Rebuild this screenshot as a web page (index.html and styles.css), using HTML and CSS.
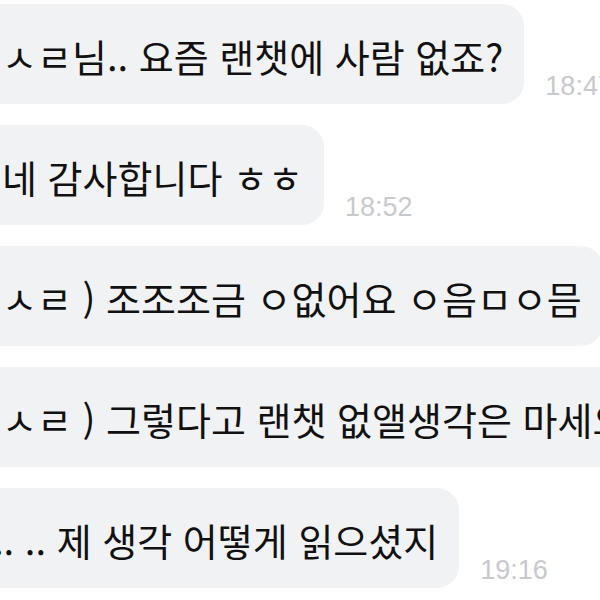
FILE: index.html
```html
<!DOCTYPE html>
<html lang="ko">
<head>
<meta charset="utf-8">
<link rel="stylesheet" href="styles.css">
</head>
<body>
<div class="chat">
  <div class="row">
    <div class="bubble">ㅅㄹ님.. 요즘 랜챗에 사람 없죠?</div>
    <div class="time">18:47</div>
  </div>
  <div class="row">
    <div class="bubble">네 감사합니다 ㅎㅎ</div>
    <div class="time">18:52</div>
  </div>
  <div class="row">
    <div class="bubble">ㅅㄹ ) 조조조금 ㅇ없어요 ㅇ음ㅁㅇ믐</div>
  </div>
  <div class="row">
    <div class="bubble">ㅅㄹ ) 그렇다고 랜챗 없앨생각은 마세요</div>
  </div>
  <div class="row">
    <div class="bubble"><span class="cut">..</span> .. 제 생각 어떻게 읽으셨지</div>
    <div class="time">19:16</div>
  </div>
</div>
</body>
</html>
```
FILE: styles.css
```css
html, body {
  margin: 0;
  padding: 0;
  background: #ffffff;
  overflow: hidden;
  width: 600px;
  height: 600px;
}

.chat {
  display: flex;
  flex-direction: column;
  gap: 21px;
  padding-top: 4px;
  margin-left: -40px;
  width: 900px;
}

.row {
  display: flex;
  align-items: flex-end;
}

.bubble {
  flex-shrink: 0;
  height: 100px;
  box-sizing: border-box;
  display: flex;
  align-items: center;
  padding: 2px 21px 0 42px;
  background: #f1f2f4;
  border-radius: 22px;
  white-space: pre;
  font-family: "Noto Sans CJK KR", "Noto Sans", sans-serif;
  font-size: 38px;
  color: #111111;
}

.cut {
  margin-left: -9px;
}

.time {
  flex-shrink: 0;
  margin-left: 21px;
  margin-bottom: 4px;
  font-family: "Liberation Sans", Arial, sans-serif;
  font-size: 27px;
  line-height: 1;
  color: #c8c9cd;
}
```
